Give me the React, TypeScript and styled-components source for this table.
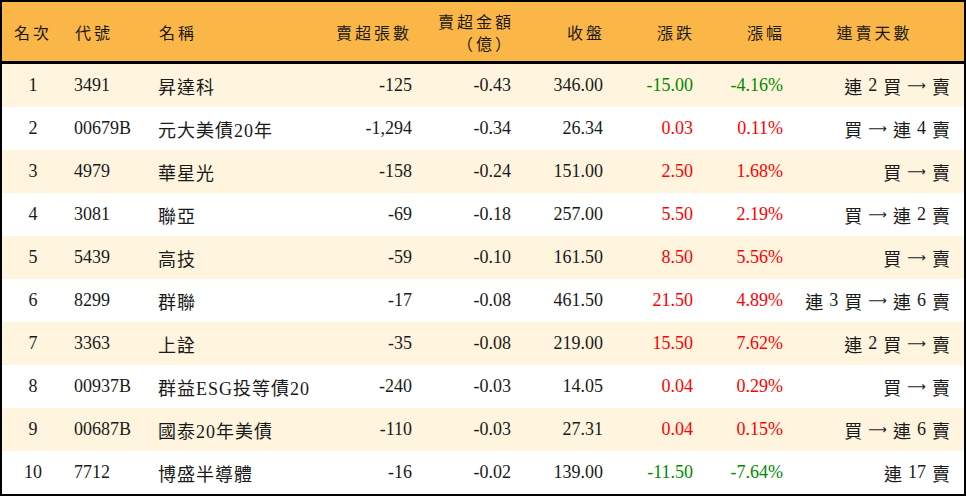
import React from "react";
import styled, { createGlobalStyle } from "styled-components";

const GlobalStyle = createGlobalStyle`
  html, body { margin: 0; padding: 0; background: #ffffff; }
  body {
    font-family: "Liberation Serif", "Noto Sans CJK TC", serif;
    color: #1a1a1a;
  }
`;

const COLS = "62px 84px 174px 100px 99px 92px 90px 90px 171px";

type Align = "left" | "right" | "center";

const Table = styled.div`
  width: 966px;
  height: 496px;
  box-sizing: border-box;
  border: 2px solid #000;
  display: flex;
  flex-direction: column;
  overflow: hidden;
`;

const HeaderRow = styled.div`
  display: grid;
  grid-template-columns: ${COLS};
  height: 59px;
  background: #fbb648;
  border-bottom: 3px solid #000;
  flex-shrink: 0;
`;

const HeadCell = styled.div<{ $align: Align; $pr?: number }>`
  display: flex;
  flex-direction: column;
  justify-content: center;
  align-items: ${(p) =>
    p.$align === "left" ? "flex-start" : p.$align === "right" ? "flex-end" : "center"};
  text-align: center;
  padding: 0 ${(p) => p.$pr ?? 10}px 0 ${(p) => (p.$align === "left" ? 11 : 0)}px;
  font-family: "Noto Sans CJK TC", serif;
  font-size: 16px;
  letter-spacing: 3px;
  line-height: 22px;
  color: #1a1a1a;
`;

const HeadLine = styled.span`
  display: block;
  line-height: 22px;
  height: 22px;
`;

const Row = styled.div<{ $alt: boolean }>`
  display: grid;
  grid-template-columns: ${COLS};
  height: 43px;
  background: ${(p) => (p.$alt ? "#fff4de" : "#ffffff")};
  flex-shrink: 0;
`;

const Cell = styled.div<{ $align: Align; $color?: string; $pr?: number }>`
  display: flex;
  align-items: center;
  justify-content: ${(p) =>
    p.$align === "left" ? "flex-start" : p.$align === "right" ? "flex-end" : "center"};
  padding: 0 ${(p) => (p.$align === "right" ? p.$pr ?? 10 : 0)}px 0
    ${(p) => (p.$align === "left" ? 10 : 0)}px;
  font-size: 18px;
  color: ${(p) => p.$color ?? "#1a1a1a"};
  white-space: nowrap;
`;

const Name = styled.span`
  letter-spacing: 1px;
`;

const Streak = styled.span`
  display: inline-flex;
  align-items: center;
  gap: 6px;
`;

const Arrow = styled.span`
  display: inline-block;
  font-family: "DejaVu Sans", sans-serif;
  font-size: 13px;
  line-height: 1;
`;

type Item = {
  rank: number;
  code: string;
  name: string;
  vol: string;
  amt: string;
  close: string;
  chg: string;
  pct: string;
  streak: string;
};

const data: Item[] = [
  { rank: 1, code: "3491", name: "昇達科", vol: "-125", amt: "-0.43", close: "346.00", chg: "-15.00", pct: "-4.16%", streak: "連 2 買 → 賣" },
  { rank: 2, code: "00679B", name: "元大美債20年", vol: "-1,294", amt: "-0.34", close: "26.34", chg: "0.03", pct: "0.11%", streak: "買 → 連 4 賣" },
  { rank: 3, code: "4979", name: "華星光", vol: "-158", amt: "-0.24", close: "151.00", chg: "2.50", pct: "1.68%", streak: "買 → 賣" },
  { rank: 4, code: "3081", name: "聯亞", vol: "-69", amt: "-0.18", close: "257.00", chg: "5.50", pct: "2.19%", streak: "買 → 連 2 賣" },
  { rank: 5, code: "5439", name: "高技", vol: "-59", amt: "-0.10", close: "161.50", chg: "8.50", pct: "5.56%", streak: "買 → 賣" },
  { rank: 6, code: "8299", name: "群聯", vol: "-17", amt: "-0.08", close: "461.50", chg: "21.50", pct: "4.89%", streak: "連 3 買 → 連 6 賣" },
  { rank: 7, code: "3363", name: "上詮", vol: "-35", amt: "-0.08", close: "219.00", chg: "15.50", pct: "7.62%", streak: "連 2 買 → 賣" },
  { rank: 8, code: "00937B", name: "群益ESG投等債20", vol: "-240", amt: "-0.03", close: "14.05", chg: "0.04", pct: "0.29%", streak: "買 → 賣" },
  { rank: 9, code: "00687B", name: "國泰20年美債", vol: "-110", amt: "-0.03", close: "27.31", chg: "0.04", pct: "0.15%", streak: "買 → 連 6 賣" },
  { rank: 10, code: "7712", name: "博盛半導體", vol: "-16", amt: "-0.02", close: "139.00", chg: "-11.50", pct: "-7.64%", streak: "連 17 賣" },
];

const colorOf = (v: string) => (v.startsWith("-") ? "#008a00" : "#ff0000");

const renderStreak = (s: string) => (
  <Streak>
    {s.split(" ").map((tok, i) =>
      tok === "→" ? <Arrow key={i}>⟶</Arrow> : <span key={i}>{tok}</span>
    )}
  </Streak>
);

export default function App() {
  return (
    <>
      <GlobalStyle />
      <Table>
        <HeaderRow>
          <HeadCell $align="center" $pr={0}>名次</HeadCell>
          <HeadCell $align="left">代號</HeadCell>
          <HeadCell $align="left">名稱</HeadCell>
          <HeadCell $align="right">賣超張數</HeadCell>
          <HeadCell $align="right" $pr={7}>
            <HeadLine>賣超金額</HeadLine>
            <HeadLine>（億）</HeadLine>
          </HeadCell>
          <HeadCell $align="right" $pr={8}>收盤</HeadCell>
          <HeadCell $align="right" $pr={8}>漲跌</HeadCell>
          <HeadCell $align="right" $pr={8}>漲幅</HeadCell>
          <HeadCell $align="center" $pr={8}>連賣天數</HeadCell>
        </HeaderRow>
        {data.map((d, i) => (
          <Row key={d.rank} $alt={i % 2 === 0}>
            <Cell $align="center">{d.rank}</Cell>
            <Cell $align="left">{d.code}</Cell>
            <Cell $align="left"><Name>{d.name}</Name></Cell>
            <Cell $align="right">{d.vol}</Cell>
            <Cell $align="right">{d.amt}</Cell>
            <Cell $align="right">{d.close}</Cell>
            <Cell $align="right" $color={colorOf(d.chg)}>{d.chg}</Cell>
            <Cell $align="right" $color={colorOf(d.pct)}>{d.pct}</Cell>
            <Cell $align="right" $pr={14}>{renderStreak(d.streak)}</Cell>
          </Row>
        ))}
      </Table>
    </>
  );
}
